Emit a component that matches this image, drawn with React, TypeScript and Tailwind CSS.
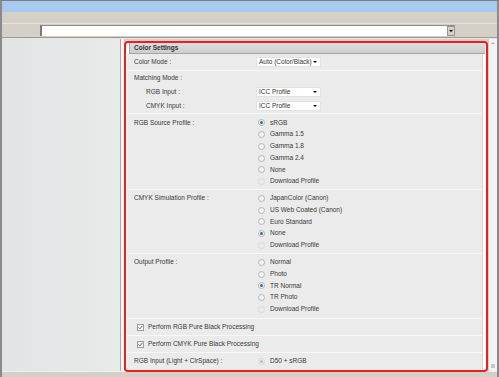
import React from 'react';

type Opt = { label: string; checked?: boolean; disabled?: boolean };

const Radio = ({ checked, disabled }: { checked?: boolean; disabled?: boolean }) => (
  <span
    className={
      disabled
        ? 'w-[7px] h-[7px] rounded-full border border-[#d6d6d6] bg-[#ededed] flex items-center justify-center shrink-0'
        : 'w-[7px] h-[7px] rounded-full border border-[#b5b5b5] bg-[#f2f2f2] flex items-center justify-center shrink-0'
    }
  >
    {checked && (
      <span
        className={
          disabled ? 'w-[3px] h-[3px] rounded-full bg-[#bdbdbd]' : 'w-[3px] h-[3px] rounded-full bg-[#2d6ea3]'
        }
      />
    )}
  </span>
);

const Checkbox = () => (
  <span className="w-[7px] h-[7px] border border-[#9c9c9c] bg-white flex items-center justify-center shrink-0">
    <svg width="5" height="5" viewBox="0 0 5 5">
      <path d="M0.6 2.4 L2 3.8 L4.4 0.8" fill="none" stroke="#3b5c93" strokeWidth="1" />
    </svg>
  </span>
);

const Select = ({ text }: { text: string }) => (
  <div className="w-[65px] h-[10px] bg-white border border-[#e2e2e2] flex items-center pl-[2px]">
    <span className="text-[#333]">{text}</span>
    <span className="ml-auto mr-[3px] w-0 h-0 border-x-[2px] border-x-transparent border-t-[2px] border-t-black" />
  </div>
);

const RadioBlock = ({ label, opts, h }: { label: string; opts: Opt[]; h: string }) => (
  <div className={`flex border-b border-[#f7f7f7] ${h}`}>
    <div className="w-[129px] pl-[7px] h-[11.75px] flex items-center">{label}</div>
    <div className="flex flex-col pl-[2px]">
      {opts.map((o) => (
        <div key={o.label} className="h-[11.75px] flex items-center gap-[5px]">
          <Radio checked={o.checked} disabled={o.disabled} />
          <span>{o.label}</span>
        </div>
      ))}
    </div>
  </div>
);

const App = () => {
  return (
    <div
      className="w-[499px] h-[377px] bg-[#d4d0c8] border-t border-t-[#7d7d7d] border-l-2 border-l-[#8a8a8a] border-r-2 border-r-[#8a8a8a] flex flex-col overflow-hidden text-[6.5px] leading-none text-[#383838]"
      style={{ fontFamily: '"Liberation Sans", Arial, sans-serif' }}
    >
      <div className="h-[11px] bg-[#a7caf0] shrink-0" />
      <div className="h-[12px] bg-[#d4d0c8] border-b border-[#e6e3dd] shrink-0" />
      <div className="h-[14px] flex items-center shrink-0 border-b border-[#9d9a94]">
        <div className="ml-[38px] w-[415px] h-[11px] bg-white border-l-2 border-t border-l-[#7a7a7a] border-t-[#8c8c8c] flex justify-end items-center">
          <div className="w-[8px] h-[10px] bg-[#d4d0c8] border border-[#9a968f] flex items-center justify-center">
            <span className="w-0 h-0 border-x-[2px] border-x-transparent border-t-[2px] border-t-black" />
          </div>
        </div>
      </div>
      <div className="h-px bg-[#e8e6e1] shrink-0" />
      <div className="h-[333px] flex shrink-0 border-b border-[#f0efec]">
        <div className="w-[119px] bg-gradient-to-r from-[#e1e4e5] to-[#e9eaea] border-r border-[#a9a9a9]" />
        <div className="w-[3px] bg-[#f4f4f4]" />
        <div className="w-[364px] h-[331px] mt-[2px] border-2 border-[#ee1d24] rounded-[4px] bg-white flex flex-col pl-px pr-[3px]">
          <div className="h-[11px] shrink-0 ml-[2px] mr-[-2px] bg-gradient-to-b from-[#dedede] to-[#cdcdcd] border-b border-l border-[#a3a3a3] rounded-tr-[3px] flex items-center pl-[4px] font-bold text-[#333]">
            Color Settings
          </div>
          <div className="flex-1 bg-[#ebebeb] border-r border-[#d6d6d6] flex flex-col">
            <div className="h-[17px] flex items-center border-b border-[#f7f7f7]">
              <div className="w-[129px] pl-[7px]">Color Mode :</div>
              <Select text="Auto (Color/Black)" />
            </div>
            <div className="h-[43px] flex flex-col border-b border-[#f7f7f7]">
              <div className="h-[14px] flex items-center pl-[7px]">Matching Mode :</div>
              <div className="h-[14px] flex items-center">
                <div className="w-[129px] pl-[19px]">RGB Input :</div>
                <Select text="ICC Profile" />
              </div>
              <div className="h-[14px] flex items-center">
                <div className="w-[129px] pl-[19px]">CMYK Input :</div>
                <Select text="ICC Profile" />
              </div>
            </div>
            <RadioBlock
              label="RGB Source Profile :"
              h="h-[76px] pt-[3px]"
              opts={[
                { label: 'sRGB', checked: true },
                { label: 'Gamma 1.5' },
                { label: 'Gamma 1.8' },
                { label: 'Gamma 2.4' },
                { label: 'None' },
                { label: 'Download Profile', disabled: true },
              ]}
            />
            <RadioBlock
              label="CMYK Simulation Profile :"
              h="h-[64px] pt-[2.5px]"
              opts={[
                { label: 'JapanColor (Canon)' },
                { label: 'US Web Coated (Canon)' },
                { label: 'Euro Standard' },
                { label: 'None', checked: true },
                { label: 'Download Profile', disabled: true },
              ]}
            />
            <RadioBlock
              label="Output Profile :"
              h="h-[65px] pt-[2.5px]"
              opts={[
                { label: 'Normal' },
                { label: 'Photo' },
                { label: 'TR Normal', checked: true },
                { label: 'TR Photo' },
                { label: 'Download Profile', disabled: true },
              ]}
            />
            <div className="h-[17px] flex items-center gap-[4px] pl-[10px] border-b border-[#f7f7f7]">
              <Checkbox />
              <span>Perform RGB Pure Black Processing</span>
            </div>
            <div className="h-[17px] flex items-center gap-[4px] pl-[10px] border-b border-[#f7f7f7]">
              <Checkbox />
              <span>Perform CMYK Pure Black Processing</span>
            </div>
            <div className="flex-1 flex items-center">
              <div className="w-[129px] pl-[7px]">RGB Input (Light + ClrSpace) :</div>
              <div className="flex items-center gap-[5px] pl-[2px]">
                <Radio checked disabled />
                <span>D50 + sRGB</span>
              </div>
            </div>
          </div>
        </div>
        <div className="w-px" />
        <div className="w-[8px] bg-[#f3f3f3] flex flex-col justify-between items-center py-[3px]">
          <span className="w-0 h-0 border-x-[2px] border-x-transparent border-b-[2px] border-b-[#b0b0b0]" />
          <span className="w-[4px] h-[4px] bg-[#c8c8c8]" />
        </div>
      </div>
      <div className="flex-1 bg-[#d4d0c8]" />
    </div>
  );
};

export default App;
